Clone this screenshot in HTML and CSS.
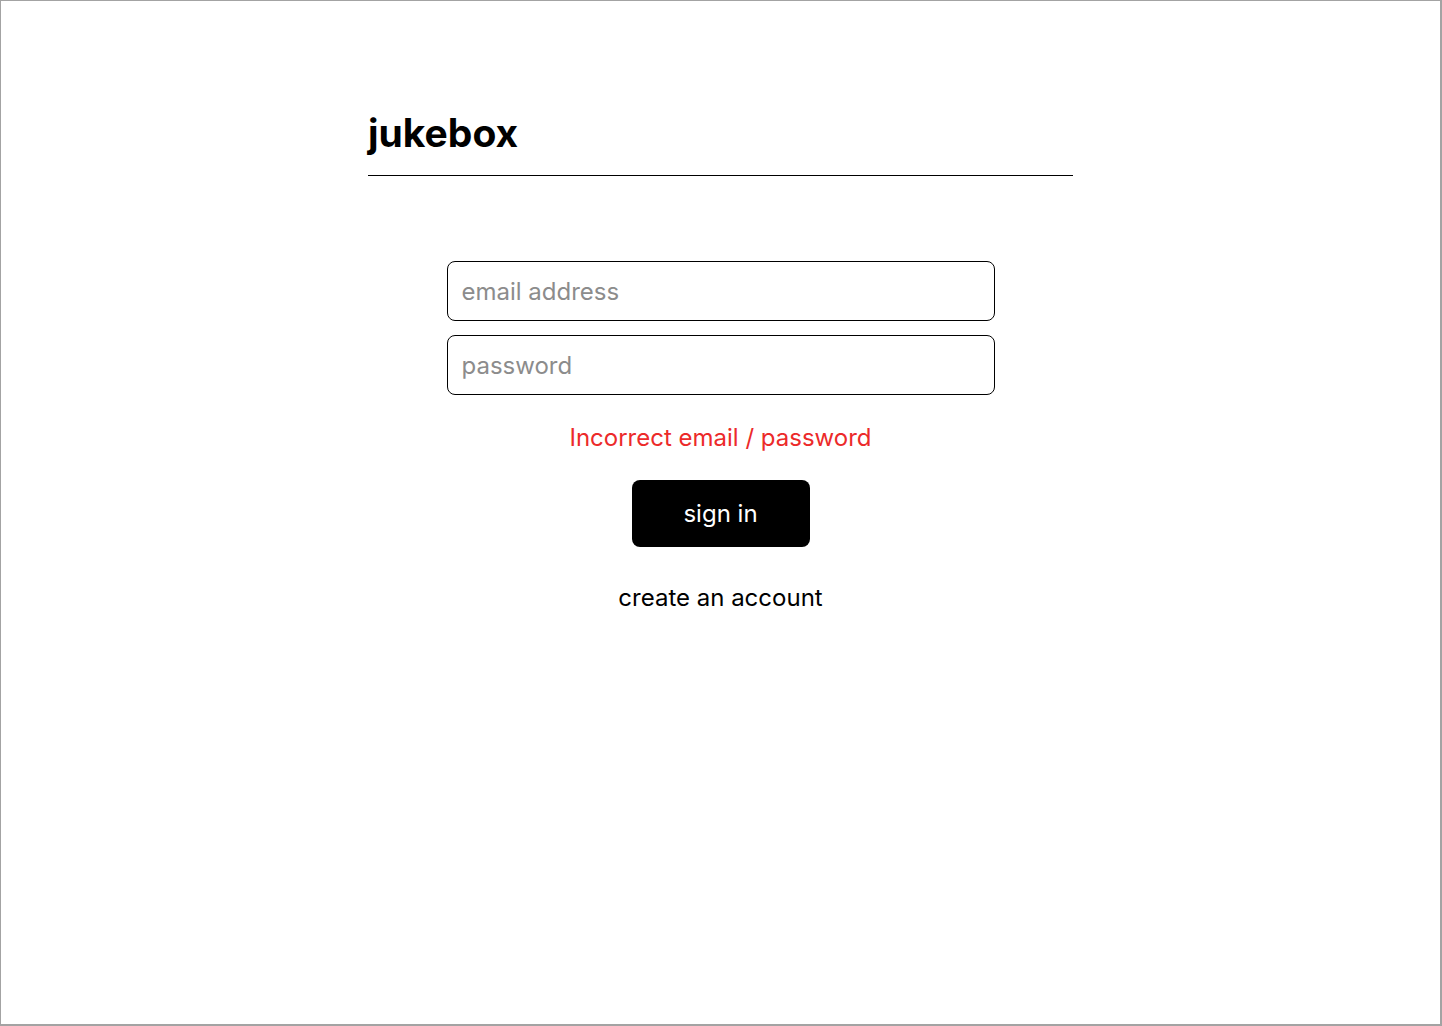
FILE: index.html
```html
<!DOCTYPE html>
<html>
<head>
<meta charset="utf-8">
<link rel="stylesheet" href="styles.css">
</head>
<body>
<div class="frame">
  <main class="page">
    <header class="header">
      <h1 class="logo">jukebox</h1>
    </header>
    <form class="login">
      <input class="field" type="email" placeholder="email address">
      <input class="field" type="password" placeholder="password">
      <p class="error">Incorrect email / password</p>
      <button class="submit" type="button">sign in</button>
      <a class="create" href="#">create an account</a>
    </form>
  </main>
</div>
</body>
</html>
```
FILE: styles.css
```css
* { box-sizing: border-box; }
html, body { margin: 0; padding: 0; background: #fff; }
body { font-family: Inter, "Noto Sans", sans-serif; color: #000; }
.frame {
  width: 1442px;
  height: 1026px;
  border: 2px solid #a3a3a3;
  border-top-width: 1px;
  border-left-width: 1px;
  overflow: hidden;
}
.page {
  width: 705px;
  margin: 0 auto;
  padding-top: 106px;
}
.header {
  border-bottom: 1px solid #000;
  padding-bottom: 16px;
}
.logo {
  margin: 0;
  font-size: 39px;
  font-weight: 700;
  line-height: 52px;
  letter-spacing: 0;
}
.login {
  width: 548px;
  margin: 85px auto 0;
  display: flex;
  flex-direction: column;
  align-items: center;
}
.field {
  width: 100%;
  height: 60px;
  border: 1px solid #000;
  border-radius: 8px;
  padding: 0 14px;
  font-family: inherit;
  font-size: 24px;
  color: #000;
  margin-bottom: 14px;
  outline: none;
}
.field::placeholder { color: #8c8c8c; }
.error {
  margin: 14px 0 0;
  color: #ec2a2a;
  font-size: 24px;
  line-height: 30px;
}
.submit {
  margin-top: 27px;
  width: 178px;
  height: 67px;
  background: #000;
  color: #fff;
  border: none;
  border-radius: 8px;
  font-family: inherit;
  font-size: 24px;
}
.create {
  margin-top: 36px;
  color: #000;
  text-decoration: none;
  font-size: 24px;
  line-height: 30px;
}
```
